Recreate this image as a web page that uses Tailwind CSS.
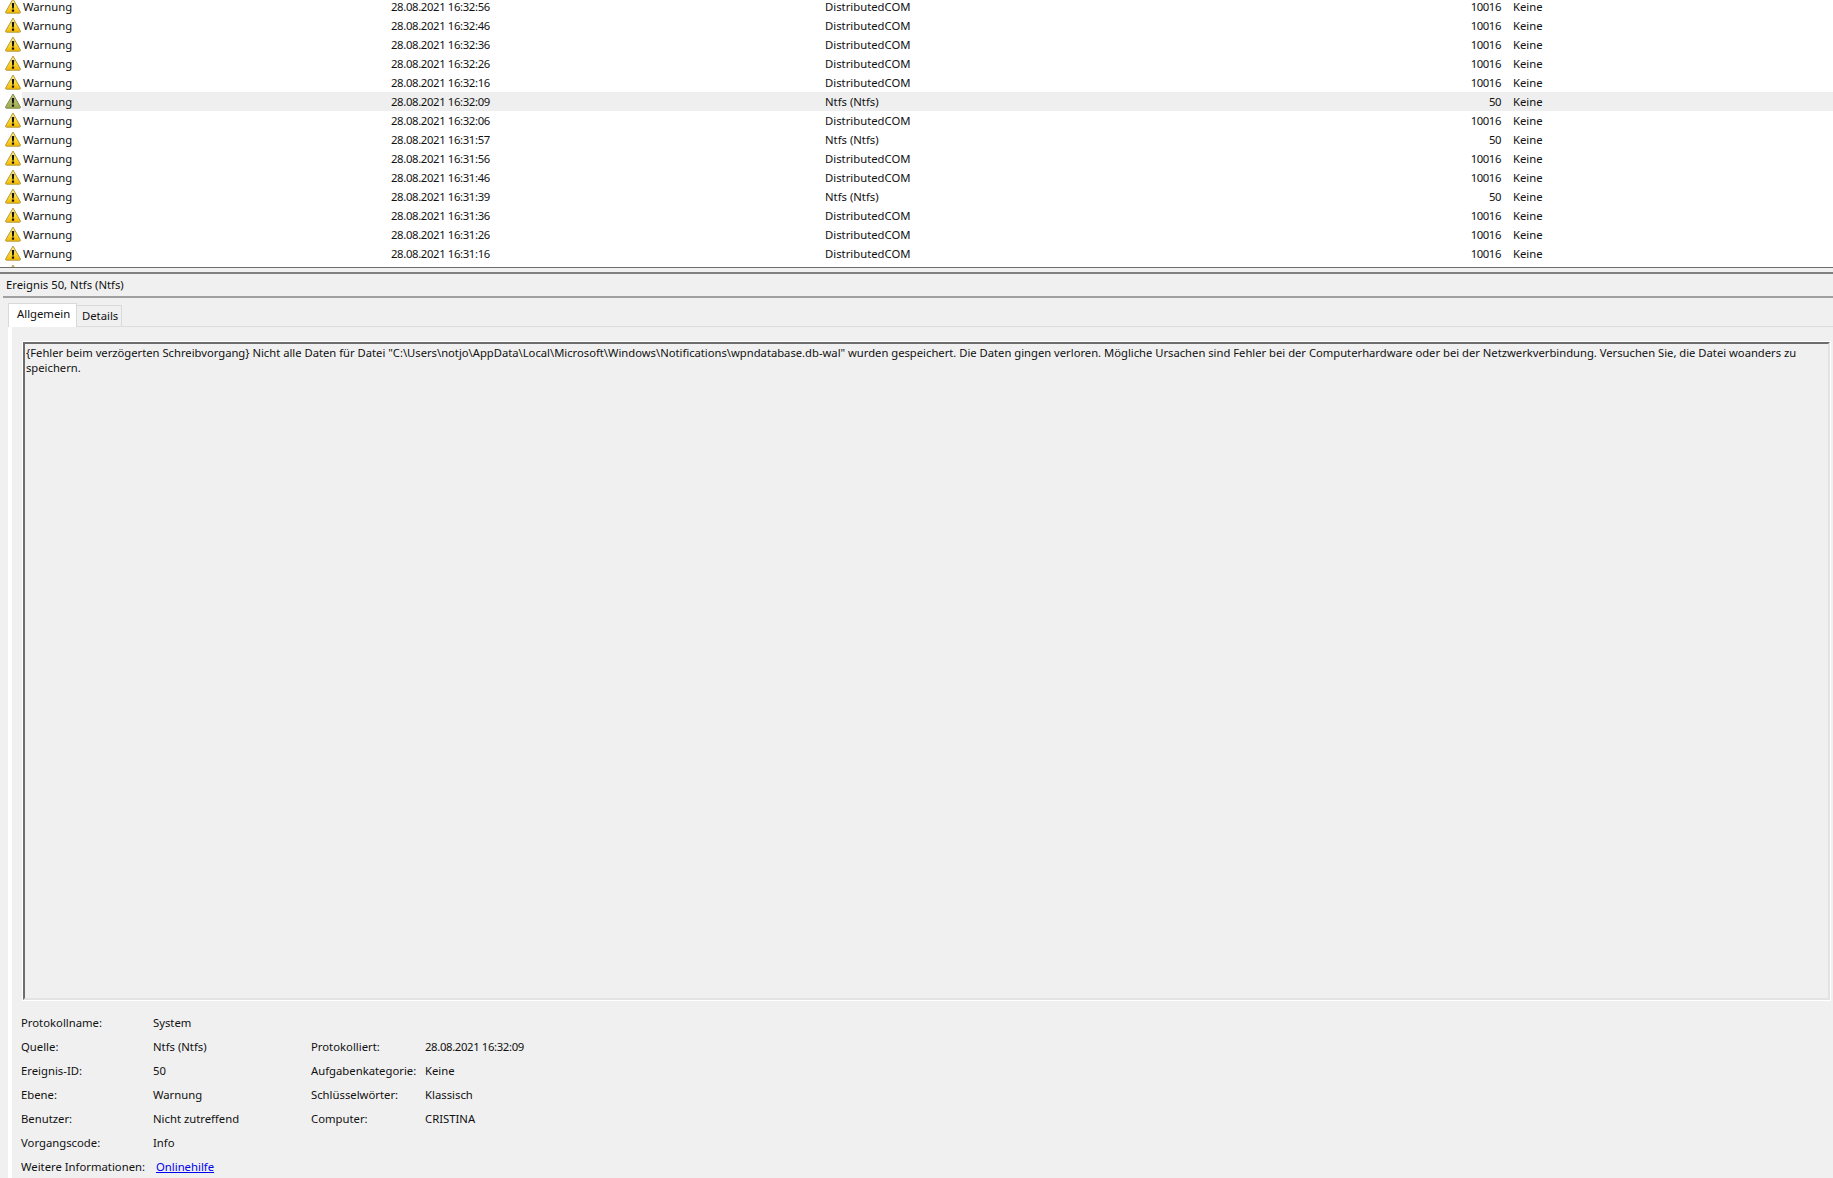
<!DOCTYPE html>
<html lang="de">
<head>
    <meta charset="UTF-8">
    <title>Ereignisanzeige</title>
    <script src="https://cdn.jsdelivr.net/npm/@tailwindcss/browser@4"></script>
</head>
<body class="bg-[#f0f0f0] overflow-hidden font-['Noto_Sans','Open_Sans',sans-serif] text-[11.3px] text-[#111]">
<svg class="absolute w-0 h-0">
    <defs>
        <linearGradient id="warnYellow" x1="0" y1="0" x2="0" y2="1">
            <stop offset="0" stop-color="#fff0a0"/>
            <stop offset="0.5" stop-color="#ffdc3c"/>
            <stop offset="1" stop-color="#f5b800"/>
        </linearGradient>
        <linearGradient id="warnGreen" x1="0" y1="0" x2="0" y2="1">
            <stop offset="0" stop-color="#c8cf88"/>
            <stop offset="1" stop-color="#a0ac4c"/>
        </linearGradient>
    </defs>
</svg>
<div class="w-[1833px] h-[1178px] overflow-hidden flex flex-col">
    <!-- event list -->
    <div id="list" class="h-[268px] shrink-0 bg-white border-b border-[#6d6d6d] overflow-hidden"></div>
    <div class="h-[4px] shrink-0"></div>
    <div class="h-[2px] shrink-0 bg-[#7f7f7f]"></div>

    <!-- detail pane -->
    <div class="h-[22px] shrink-0 pl-[6px] flex items-center">Ereignis 50, Ntfs (Ntfs)</div>
    <div class="h-[2px] shrink-0 ml-[3px] bg-[#a0a0a0]"></div>

    <div class="ml-[8px] mt-[5px] flex h-[23px] items-end shrink-0">
        <div class="w-[69px] h-[24px] -mb-[1px] z-10 pl-[8px] pb-[2px] bg-white border border-b-0 border-[#d9d9d9] flex items-center">Allgemein</div>
        <div class="w-[45px] h-[21px] pl-[5px] bg-[#f0f0f0] border border-l-0 border-b-0 border-[#d9d9d9] flex items-center">Details</div>
    </div>

    <div class="flex-1 ml-[8px] border-t border-[#dcdcdc] border-l-4 border-l-white">
        <div class="mt-[15px] ml-[11px] mr-[3px] h-[658px] border-2 border-[#6d6d6d] border-r-[#e3e3e3] border-b-[#e3e3e3] outline-1 outline-white pl-[1px] pt-[1px] leading-[15px] text-[11.22px]">
            {Fehler beim verzögerten Schreibvorgang} Nicht alle Daten für Datei "C:\Users\notjo\AppData\Local\Microsoft\Windows\Notifications\wpndatabase.db-wal" wurden gespeichert. Die Daten gingen verloren. Mögliche Ursachen sind Fehler bei der Computerhardware oder bei der Netzwerkverbindung. Versuchen Sie, die Datei woanders zu speichern.
        </div>

        <div class="mt-[11px] ml-[9px] grid grid-cols-[132px_158px_114px_1fr] auto-rows-[24px] items-center">
            <div>Protokollname:</div><div>System</div><div></div><div></div>
            <div>Quelle:</div><div>Ntfs (Ntfs)</div><div>Protokolliert:</div><div class="tracking-[-0.35px]">28.08.2021 16:32:09</div>
            <div>Ereignis-ID:</div><div>50</div><div>Aufgabenkategorie:</div><div>Keine</div>
            <div>Ebene:</div><div>Warnung</div><div>Schlüsselwörter:</div><div>Klassisch</div>
            <div>Benutzer:</div><div>Nicht zutreffend</div><div>Computer:</div><div>CRISTINA</div>
            <div>Vorgangscode:</div><div>Info</div><div></div><div></div>
            <div class="whitespace-nowrap">Weitere Informationen:</div><div class="pl-[3px]"><a href="#" class="text-[#0000ee] underline">Onlinehilfe</a></div><div></div><div></div>
        </div>
    </div>
</div>

<script>
    const rows = [
        ['28.08.2021 16:32:56', 'DistributedCOM', '10016'],
        ['28.08.2021 16:32:46', 'DistributedCOM', '10016'],
        ['28.08.2021 16:32:36', 'DistributedCOM', '10016'],
        ['28.08.2021 16:32:26', 'DistributedCOM', '10016'],
        ['28.08.2021 16:32:16', 'DistributedCOM', '10016'],
        ['28.08.2021 16:32:09', 'Ntfs (Ntfs)', '50'],
        ['28.08.2021 16:32:06', 'DistributedCOM', '10016'],
        ['28.08.2021 16:31:57', 'Ntfs (Ntfs)', '50'],
        ['28.08.2021 16:31:56', 'DistributedCOM', '10016'],
        ['28.08.2021 16:31:46', 'DistributedCOM', '10016'],
        ['28.08.2021 16:31:39', 'Ntfs (Ntfs)', '50'],
        ['28.08.2021 16:31:36', 'DistributedCOM', '10016'],
        ['28.08.2021 16:31:26', 'DistributedCOM', '10016'],
        ['28.08.2021 16:31:16', 'DistributedCOM', '10016'],
        ['', '', '']
    ];
    const list = document.getElementById('list');
    list.innerHTML = '<div class="-mt-[3px]">' + rows.map((r, i) => {
        const selected = i === 5;
        const fill = selected ? 'url(#warnGreen)' : 'url(#warnYellow)';
        const stroke = selected ? '#7f8a50' : '#b09a40';
        const bg = selected ? 'bg-[#efefef]' : 'bg-white';
        return `<div class="h-[19px] flex items-center">
            <svg class="ml-[5px] mr-[1px] -mt-[2px] w-[16px] h-[16px] shrink-0" viewBox="0 0 16 16">
                <path d="M8 1 L15.4 14 Q15.6 15.2 14.5 15.2 L1.5 15.2 Q0.4 15.2 0.6 14 Z" fill="${fill}" stroke="${stroke}" stroke-width="1" stroke-linejoin="round"/>
                <path d="M6.8 5 L9.2 5 L8.8 10.5 L7.2 10.5 Z" fill="#111"/>
                <rect x="6.9" y="11.5" width="2.2" height="2.2" fill="#111"/>
            </svg>
            <div class="flex-1 h-full pt-[1px] flex items-center ${bg}">
                <div class="w-[369px] pl-[1px] shrink-0">${r[0] ? 'Warnung' : ''}</div>
                <div class="w-[434px] shrink-0 tracking-[-0.35px]">${r[0]}</div>
                <div class="w-[622px] shrink-0">${r[1]}</div>
                <div class="w-[54px] shrink-0 text-right tracking-[-0.4px]">${r[2]}</div>
                <div class="pl-[12px]">${r[0] ? 'Keine' : ''}</div>
            </div>
        </div>`;
    }).join('') + '</div>';
</script>
</body>
</html>
